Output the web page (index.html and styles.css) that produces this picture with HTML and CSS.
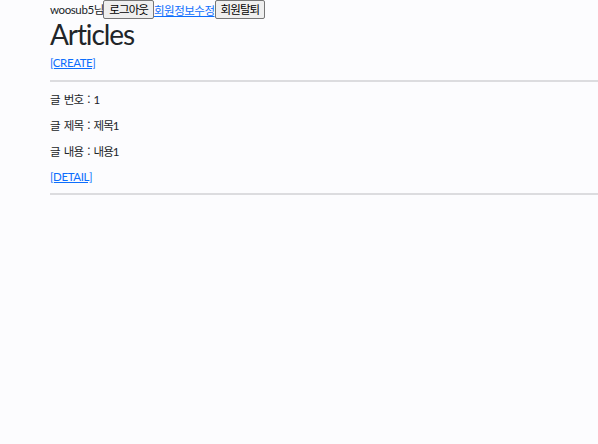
FILE: index.html
```html
<!DOCTYPE html>
<html lang="ko">
<head>
<meta charset="utf-8">
<title>Articles</title>
<link rel="stylesheet" href="styles.css">
</head>
<body>
<div class="page">
  <div class="userbar">
    <span class="user">woosub5<span class="ko">님</span></span><button class="btn" type="button">로그아웃</button><a class="link ko nav-link" href="#">회원정보수정</a><button class="btn" type="button">회원탈퇴</button>
  </div>
  <h1 class="title">Articles</h1>
  <a class="link create" href="#">[CREATE]</a>
  <hr class="rule">
  <div class="article">
    <p class="field"><span class="ko">글 번호 : </span>1</p>
    <p class="field"><span class="ko">글 제목 : 제목</span>1</p>
    <p class="field"><span class="ko">글 내용 : 내용</span>1</p>
    <a class="link detail" href="#">[DETAIL]</a>
  </div>
  <hr class="rule">
</div>
</body>
</html>
```
FILE: styles.css
```css
html, body {
  margin: 0;
  padding: 0;
  background: #fcfcfe;
}
body {
  font-family: "Lato", "Noto Sans CJK KR", sans-serif;
  font-size: 11.5px;
  letter-spacing: -0.4px;
  line-height: 18px;
  color: #212529;
}
.ko {
  font-family: "Noto Sans CJK KR", sans-serif;
  font-size: 11.5px;
  letter-spacing: -1px;
  word-spacing: 2px;
  line-height: 18px;
}
.page {
  padding-left: 50px;
}
.userbar {
  display: flex;
  align-items: center;
  height: 19px;
  white-space: nowrap;
}
.btn {
  font-family: "Noto Sans CJK KR", sans-serif;
  font-size: 11.5px;
  letter-spacing: -0.9px;
  line-height: 15px;
  height: 19px;
  padding: 0 5px;
  margin: 0;
  background: #efefef;
  border: 1px solid #767676;
  border-radius: 2px;
  color: #000;
}
.link {
  color: #0d6efd;
  text-decoration: underline;
}
.nav-link {
  letter-spacing: -0.5px;
}
.title {
  font-size: 28px;
  font-weight: 400;
  letter-spacing: -1.1px;
  line-height: 34px;
  margin: -2px 0 3px 0;
}
.create, .detail {
  display: block;
  height: 18px;
  align-self: flex-start;
}
.detail {
  height: 17px;
}
.rule {
  margin: 8px 0 8px 0;
  border: 0;
  border-top: 2px solid #dcdcdf;
  height: 0;
}
.article {
  display: flex;
  flex-direction: column;
  align-items: flex-start;
}
.field {
  margin: 0 0 8px 0;
  height: 18px;
  white-space: nowrap;
}
```
